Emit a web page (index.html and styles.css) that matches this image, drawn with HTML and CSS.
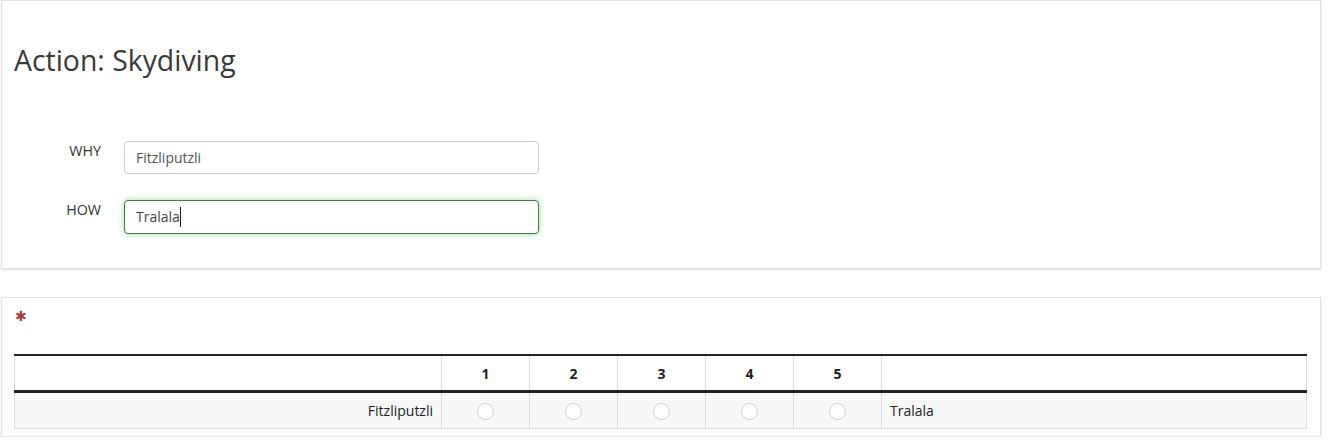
FILE: index.html
```html
<!DOCTYPE html>
<html>
<head>
<meta charset="utf-8">
<link rel="stylesheet" href="styles.css">
</head>
<body>
<div class="page">
  <section class="panel panel-top">
    <h3 class="title">Action: Skydiving</h3>
    <div class="form">
      <div class="form-row">
        <label class="label">WHY</label>
        <input class="input" type="text" value="Fitzliputzli">
      </div>
      <div class="form-row">
        <label class="label">HOW</label>
        <div class="input input-focus">Tralala<span class="caret"></span></div>
      </div>
    </div>
  </section>
  <section class="panel panel-bottom">
    <div class="asterisk">✱</div>
    <table class="grid">
      <colgroup>
        <col class="col-left">
        <col class="col-num"><col class="col-num"><col class="col-num"><col class="col-num"><col class="col-num">
        <col class="col-right">
      </colgroup>
      <thead>
        <tr>
          <th></th>
          <th>1</th>
          <th>2</th>
          <th>3</th>
          <th>4</th>
          <th>5</th>
          <th></th>
        </tr>
      </thead>
      <tbody>
        <tr>
          <td class="ans-left">Fitzliputzli</td>
          <td class="c-num"><span class="radio"></span></td>
          <td class="c-num"><span class="radio"></span></td>
          <td class="c-num"><span class="radio"></span></td>
          <td class="c-num"><span class="radio"></span></td>
          <td class="c-num"><span class="radio"></span></td>
          <td class="ans-right">Tralala</td>
        </tr>
      </tbody>
    </table>
  </section>
</div>
</body>
</html>
```
FILE: styles.css
```css
html, body {
  margin: 0;
  padding: 0;
  background: #ffffff;
}
body {
  font-family: "Open Sans", "Noto Sans", sans-serif;
  color: #333333;
  font-size: 14px;
}
.page {
  width: 1320px;
  margin-left: 1px;
}
.panel {
  box-sizing: border-box;
  background: #fff;
  border: 1px solid #e3e3e3;
  box-shadow: 0 1px 2px rgba(0, 0, 0, 0.12);
}
.panel-top {
  height: 269px;
  padding: 0 12px;
}
.title {
  margin: 0;
  padding-top: 40px;
  font-size: 28.4px;
  font-weight: 400;
  line-height: 38px;
  color: #3a3a3a;
}
.form {
  margin-top: 62px;
}
.form-row {
  display: flex;
  align-items: flex-start;
  margin-bottom: 26px;
}
.label {
  width: 87px;
  text-align: right;
  font-size: 14.3px;
  line-height: 22px;
  color: #333;
  margin-top: -1px;
}
.input {
  box-sizing: border-box;
  margin-left: 23px;
  width: 415px;
  height: 33px;
  border: 1px solid #cccccc;
  border-radius: 4px;
  padding: 0 11px;
  font-family: "Open Sans", "Noto Sans", sans-serif;
  font-size: 14px;
  color: #555;
  line-height: 31px;
  background: #fff;
  outline: none;
}
.input-focus {
  border-color: #2e8b2e;
  box-shadow: 0 0 6px rgba(60, 150, 60, 0.45);
  height: 34px;
  line-height: 32px;
  color: #444;
}
.caret {
  display: inline-block;
  width: 1px;
  height: 20px;
  background: #222;
  vertical-align: -5px;
}
.panel-bottom {
  margin-top: 28px;
  height: 140px;
  padding: 0 12px;
}
.asterisk {
  color: #a9383c;
  font-size: 14px;
  line-height: 14px;
  padding-top: 11px;
  padding-left: 1px;
  height: 45px;
  font-family: "DejaVu Sans", sans-serif;
  font-weight: 700;
}
.grid {
  width: 1292px;
  table-layout: fixed;
  border-collapse: collapse;
  font-size: 14px;
  color: #222;
}
.col-left { width: 427px; }
.col-num { width: 88px; }
.col-right { width: 425px; }
.grid th {
  height: 34px;
  border-top: 2px solid #222;
  border-bottom: 3px solid #222;
  border-left: 1px solid #dcdcdc;
  border-right: 1px solid #dcdcdc;
  font-weight: 700;
  text-align: center;
  padding: 0;
}
.grid td {
  height: 35px;
  background: #f8f8f8;
  border: 1px solid #dcdcdc;
  border-top: none;
  padding: 0 8px;
}
.grid td.c-num { padding: 0; text-align: center; }
.ans-left { text-align: right; }
.ans-right { text-align: left; }
.radio {
  display: inline-block;
  box-sizing: border-box;
  width: 17px;
  height: 17px;
  border: 1px solid #cfcfcf;
  border-radius: 50%;
  background: #fff;
  vertical-align: middle;
}
```
